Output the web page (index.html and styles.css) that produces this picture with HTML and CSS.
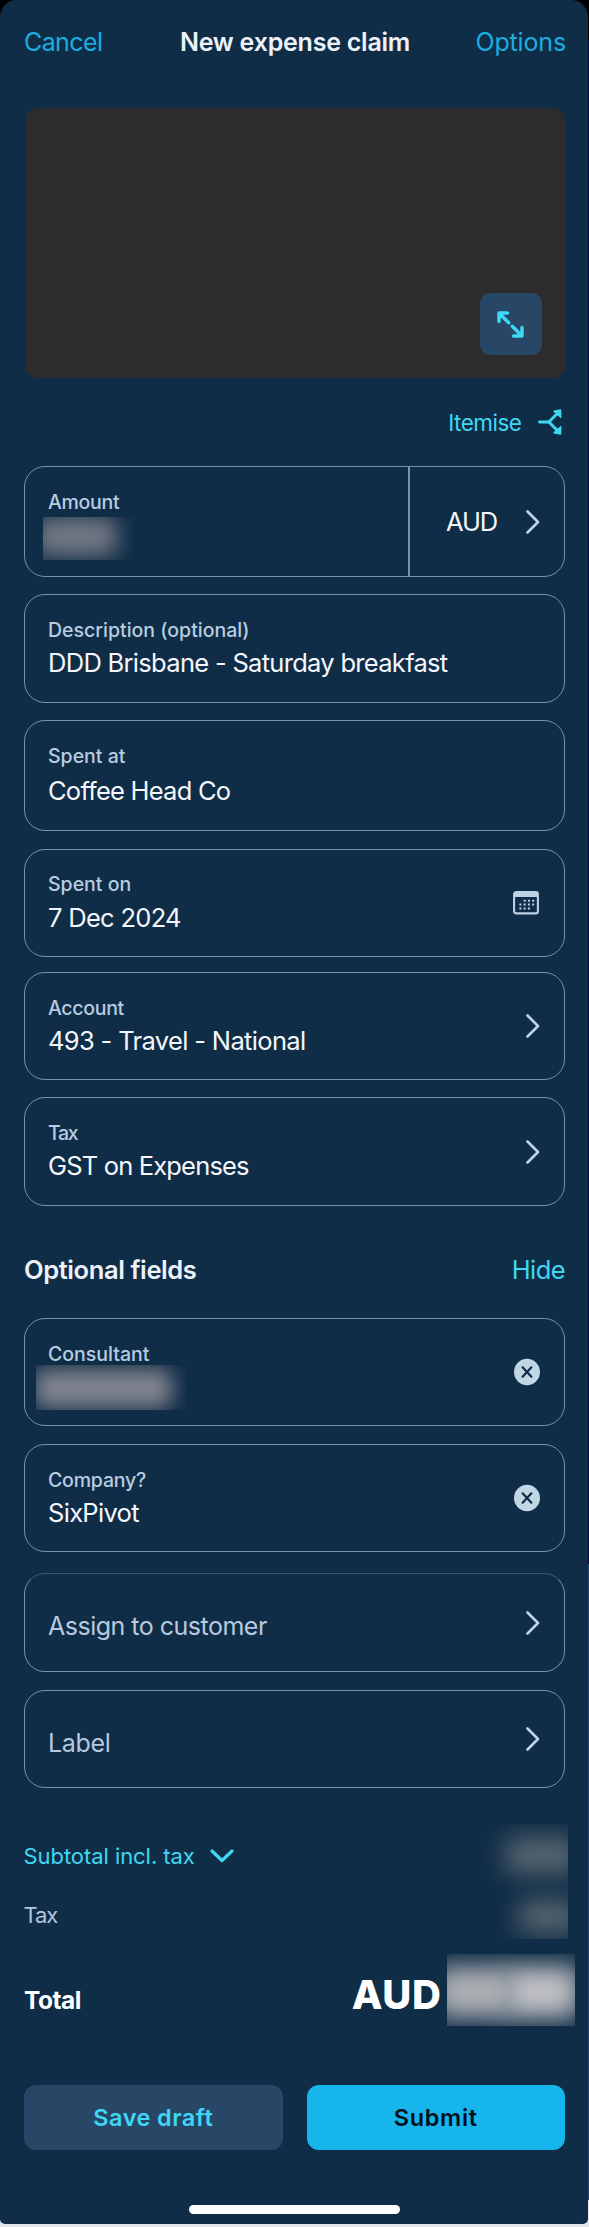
FILE: index.html
```html
<!DOCTYPE html>
<html lang="en">
<head>
<meta charset="utf-8">
<title>New expense claim</title>
<link rel="stylesheet" href="styles.css">
</head>
<body>
<svg width="0" height="0" class="defs" aria-hidden="true">
  <symbol id="chevron" viewBox="0 0 14 24"><path d="M1.5 1.5 12 12 1.5 22.5" fill="none" stroke="currentColor" stroke-width="2.6" stroke-linecap="round" stroke-linejoin="round"/></symbol>
  <symbol id="clear" viewBox="0 0 26 28"><ellipse cx="13" cy="14" rx="13" ry="13.2" fill="#c2d7e5"/><path d="M8.6 9.3 17.4 18.7M17.4 9.3 8.6 18.7" stroke="#102c46" stroke-width="2.2" stroke-linecap="round"/></symbol>
</svg>
<main class="screen">
  <header class="nav">
    <a class="nav-link cancel">Cancel</a>
    <h1 class="nav-title">New expense claim</h1>
    <a class="nav-link options">Options</a>
  </header>

  <section class="receipt">
    <button class="expand" aria-label="Expand">
      <svg width="27" height="27" viewBox="0 0 27 27" fill="none" stroke="#3fd8f4" stroke-width="3.4" stroke-linecap="round" stroke-linejoin="round"><path d="M2 10.5V2H10.5M2.4 2.4 11.7 11.7M25 16.5V25H16.5M24.6 24.6 15.3 15.3"/></svg>
    </button>
  </section>

  <div class="itemise">
    <span>Itemise</span>
    <svg width="24" height="26" viewBox="0 0 24 26"><path d="M1.5 13H10C13 12.5 15 7.5 19.5 4.8M10 13C13 13.5 15 18.5 19.5 21.2" fill="none" stroke="#3fd8f4" stroke-width="2.8" stroke-linecap="round"/><path d="M16 2.2 22.5 1 22.8 8.2ZM16 23.8 22.5 25 22.8 17.8Z" fill="#3fd8f4" stroke="#3fd8f4" stroke-width="1.4" stroke-linejoin="round"/></svg>
  </div>

  <section class="field amount">
    <div class="text">
      <span class="label tight">Amount</span>
      <div class="redacted redacted-amount"></div>
    </div>
    <div class="currency">
      <span class="value currency-code">AUD</span>
      <svg class="chevron"><use href="#chevron"/></svg>
    </div>
  </section>
  <section class="field description">
    <div class="text"><span class="label">Description (optional)</span><span class="value">DDD Brisbane - Saturday breakfast</span></div>
  </section>
  <section class="field spent-at">
    <div class="text"><span class="label">Spent at</span><span class="value">Coffee Head Co</span></div>
  </section>
  <section class="field spent-on">
    <div class="text"><span class="label">Spent on</span><span class="value">7 Dec 2024</span></div>
    <svg class="calendar" viewBox="0 0 26 24"><rect x="1.1" y="1.1" width="23.8" height="21.3" rx="2.2" fill="none" stroke="#bcd2e4" stroke-width="2.1"/><path d="M1 2.5Q1 1 2.5 1H23.5Q25 1 25 2.5V6H1Z" fill="#bcd2e4"/><path d="M10.7 9.7H21.5M6.4 13.6H21.5M6.4 17.5H17.4" stroke="#bcd2e4" stroke-width="2" stroke-dasharray="2 2.25"/></svg>
  </section>
  <section class="field account">
    <div class="text"><span class="label tight">Account</span><span class="value account-value">493 - Travel - National</span></div>
    <svg class="chevron"><use href="#chevron"/></svg>
  </section>
  <section class="field tax">
    <div class="text"><span class="label tax-label">Tax</span><span class="value tax-value">GST on Expenses</span></div>
    <svg class="chevron"><use href="#chevron"/></svg>
  </section>

  <div class="section-head">
    <h2>Optional fields</h2>
    <a>Hide</a>
  </div>

  <section class="field consultant">
    <div class="text"><span class="label">Consultant</span><div class="redacted redacted-name"></div></div>
    <svg class="clear"><use href="#clear"/></svg>
  </section>
  <section class="field company">
    <div class="text"><span class="label company-label">Company?</span><span class="value">SixPivot</span></div>
    <svg class="clear"><use href="#clear"/></svg>
  </section>
  <section class="field empty customer">
    <span class="placeholder">Assign to customer</span>
    <svg class="chevron"><use href="#chevron"/></svg>
  </section>
  <section class="field empty tag">
    <span class="placeholder tag-text">Label</span>
    <svg class="chevron"><use href="#chevron"/></svg>
  </section>

  <section class="totals">
    <div class="breakdown">
      <div class="lines">
        <div class="subtotal"><span>Subtotal incl. tax</span><svg width="24" height="14" viewBox="0 0 24 14"><path d="M2 2 12 11.5 22 2" fill="none" stroke="#3fd8f4" stroke-width="3.2" stroke-linecap="round" stroke-linejoin="round"/></svg></div>
        <div class="tax-line">Tax</div>
      </div>
      <div class="redacted redacted-lines"></div>
    </div>
    <div class="total">
      <span class="total-label">Total</span>
      <span class="total-currency">AUD</span>
      <div class="redacted redacted-total"></div>
    </div>
  </section>

  <footer class="actions">
    <button class="button secondary">Save draft</button>
    <button class="button primary">Submit</button>
  </footer>
  <div class="home"></div>
</main>
</body>
</html>
```
FILE: styles.css
```css
* { box-sizing: border-box; }
html { background: #fff; }
body {
  margin: 0;
  height: 2227px;
  font-family: Inter, "Liberation Sans", sans-serif;
  background: linear-gradient(#000 0 40px, #02063a 40px 1564px, #24476b 1564px 2200px, #e4e8ec 2200px);
}
.defs { position: absolute; }
.screen {
  width: 588px;
  height: 2224px;
  padding: 0 23px 0 24px;
  background: #102d47;
  border-radius: 17px 17px 5px 5px;
  overflow: hidden;
}
.nav {
  display: flex;
  justify-content: space-between;
  align-items: center;
  width: 542px;
  height: 84px;
}
.nav-link, .nav-title { font-size: 25px; line-height: 32px; }
.nav-link { color: #1bade0; }
.cancel { letter-spacing: -.59px; width: 140px; }
.options { letter-spacing: -.15px; width: 140px; text-align: right; }
.nav-title { margin: 0; font-weight: 600; color: #edf2fa; letter-spacing: -.23px; }
.receipt {
  display: flex;
  align-items: flex-end;
  justify-content: flex-end;
  height: 270px;
  margin: 24px 0 0 1px;
  padding: 0 23px 23px 0;
  border-radius: 13px;
  background: #2c2c2e;
}
.expand {
  display: grid;
  place-items: center;
  width: 62px;
  height: 62px;
  padding: 0 2px 0 0;
  border: 0;
  border-radius: 11px;
  background: #284766;
}
.itemise {
  display: flex;
  justify-content: flex-end;
  align-items: center;
  gap: 16.5px;
  height: 88px;
  padding: 0 3px 0 0;
  font-size: 22.5px;
  letter-spacing: -.5px;
  color: #3fd8f4;
}
.field {
  display: flex;
  align-items: center;
  width: 541px;
  padding: 0 24px;
  border: 1px solid #7790a8;
  border-radius: 21px;
}
.text { flex: 1; align-self: stretch; padding-top: 23px; }
.label {
  display: block;
  margin-left: -1px;
  font-size: 19.5px;
  font-weight: 500;
  line-height: 24px;
  color: #b8cce0;
}
.tight { letter-spacing: -.3px; }
.tax-label { letter-spacing: -1.3px; }
.company-label { letter-spacing: -.19px; }
.value {
  display: block;
  margin: 5px 0 0 -1px;
  font-size: 25.5px;
  line-height: 32px;
  letter-spacing: -.7px;
  white-space: nowrap;
  color: #f5f7fc;
}
.account-value { letter-spacing: -.65px; }
.tax-value { letter-spacing: -.83px; }
.chevron { flex: none; width: 14px; height: 24px; color: #bfd3ec; }
.clear { flex: none; width: 26px; height: 28px; }
.calendar { flex: none; width: 26px; height: 24px; margin-right: 1px; }
.amount { height: 111px; align-items: stretch; }
.currency {
  display: flex;
  align-items: center;
  gap: 29px;
  width: 132px;
  padding-left: 36px;
  border-left: 2px solid #7c92a9;
}
.currency-code { margin: 0; letter-spacing: -1.2px; }
.description { height: 109px; margin-top: 17px; }
.spent-at { height: 111px; margin-top: 17px; }
.spent-at .value { margin-top: 6.5px; letter-spacing: -.77px; }
.spent-on { height: 108px; margin-top: 18px; }
.spent-on .text { padding-top: 22px; }
.spent-on .value { margin-top: 6px; }
.account { height: 108px; margin-top: 15px; }
.tax { height: 109px; margin-top: 17px; }
.section-head {
  display: flex;
  justify-content: space-between;
  align-items: center;
  height: 112px;
  padding-top: 15px;
}
.section-head h2 {
  margin: 0;
  font-size: 25.5px;
  font-weight: 600;
  letter-spacing: -.4px;
  color: #edf2f8;
}
.section-head a { font-size: 25.5px; letter-spacing: -.58px; color: #3fd8f4; }
.consultant { height: 108px; }
.company { height: 108px; margin-top: 18px; }
.empty { height: 98px; justify-content: space-between; }
.customer { margin-top: 21px; height: 99px; border-top-color: #3b566e; }
.tag { margin-top: 18px; }
.placeholder {
  padding-top: 7px;
  margin-left: -1px;
  font-size: 25px;
  letter-spacing: -.5px;
  color: #b6c9df;
}
.tag-text { letter-spacing: -.3px; }

/* Hidden amounts: soft smudges cropped by a hard-edged box */
.redacted { position: relative; overflow: hidden; }
.redacted::before, .redacted::after {
  content: "";
  position: absolute;
  border-radius: 10px;
}
.redacted-amount { width: 90px; height: 43px; margin: 3px 0 0 -6px; }
.redacted-amount::before { inset: 0 16px 4px -8px; background: #757985; filter: blur(11px); }
.redacted-name { width: 150px; height: 45px; margin: -1px 0 0 -13px; }
.redacted-name::before { inset: 4px 14px 2px -2px; background: #81848f; filter: blur(10px); }
.redacted-lines { width: 88px; height: 115px; }
.redacted-lines::before { inset: 13px -12px 65px 25px; background: #56656f; filter: blur(12px); }
.redacted-lines::after { inset: 76px -12px 6px 38px; background: #56656f; filter: blur(12px); }
.redacted-total { width: 128px; height: 72px; }
.redacted-total::before { inset: 12px 62px 8px -12px; background: #aeb0b5; filter: blur(12px); }
.redacted-total::after { inset: 12px -4px 8px 58px; background: #bfc0c4; filter: blur(12px); }

.totals { margin-right: -10px; padding-top: 36px; }
.breakdown { display: flex; justify-content: space-between; padding-right: 7px; height: 130px; }
.lines { padding-top: 15.5px; font-size: 22px; line-height: 32px; }
.subtotal {
  display: flex;
  align-items: center;
  gap: 15px;
  margin-left: -.5px;
  letter-spacing: -.06px;
  color: #3fd8f4;
}
.tax-line { margin-top: 27px; margin-left: -.5px; letter-spacing: -1.1px; color: #b3c6d9; }
.total { display: flex; align-items: center; height: 72px; }
.total-label {
  flex: 1;
  padding-top: 19px;
  font-size: 24.5px;
  font-weight: 700;
  letter-spacing: -.5px;
  color: #fff;
}
.total-currency {
  margin-right: 5.5px;
  padding-top: 8px;
  font-size: 40px;
  font-weight: 800;
  letter-spacing: .6px;
  color: #fff;
}
.actions { display: flex; gap: 24px; width: 541px; margin-top: 59px; }
.button {
  flex: 1;
  height: 65px;
  padding: 0;
  border: 0;
  border-radius: 12px;
  font: 600 23.5px Inter, "Liberation Sans", sans-serif;
}
.secondary { background: #284766; color: #3fd8f4; letter-spacing: .44px; }
.primary { background: #16b5ec; color: #04101c; letter-spacing: .67px; }
.home { width: 211px; height: 9px; margin: 55px auto 0 165px; border-radius: 5px; background: #fff; }
```
